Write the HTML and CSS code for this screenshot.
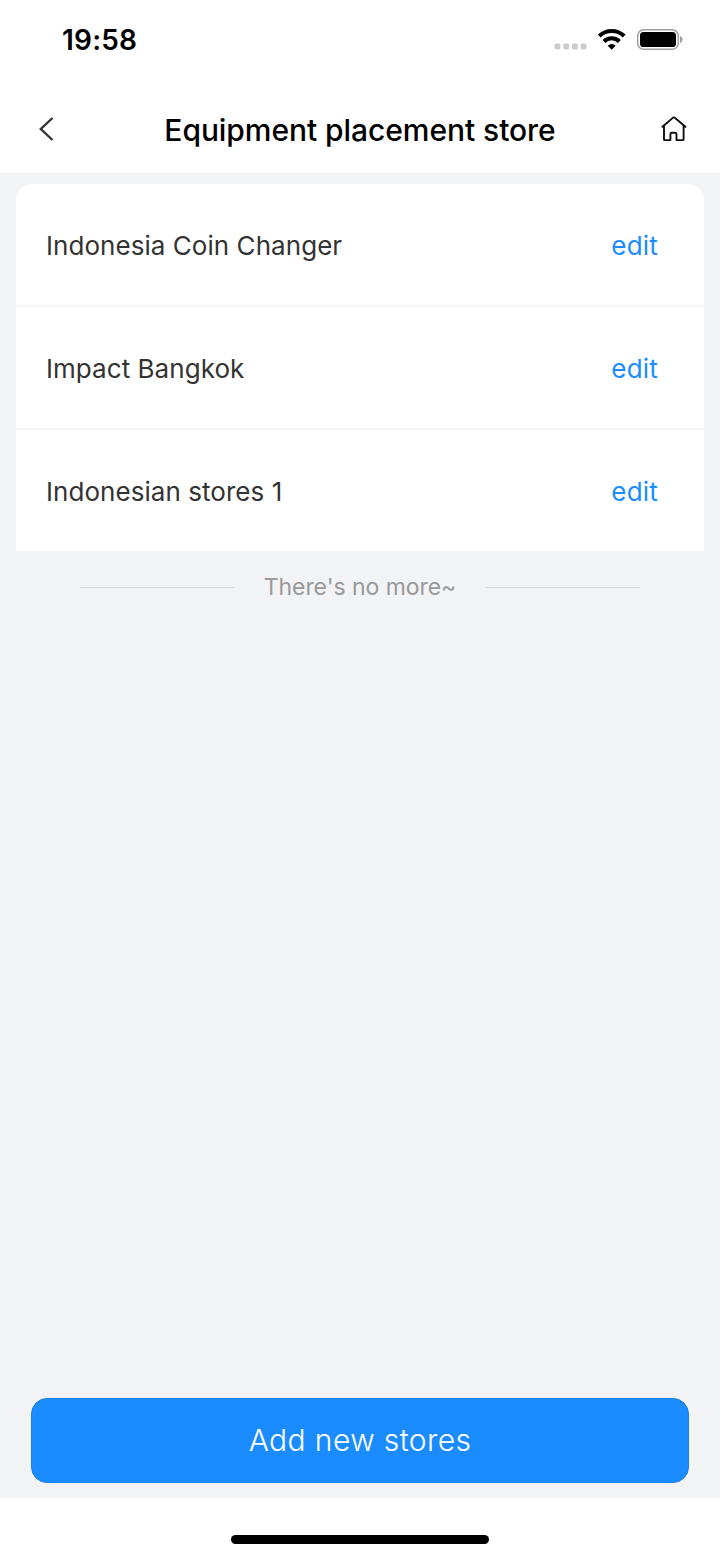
FILE: index.html
```
<!DOCTYPE html>

<html lang="en">
    <head>
        <meta charset="utf-8">
        <title>Equipment placement store</title>
        <link rel="stylesheet" href="styles.css">
    </head>
    <body>

        <div class="status_bar">
            <span class="time">19:58</span>
            <svg class="status_icons" width="130" height="24" viewBox="0 0 130 24">
                <g fill="#cbcbcb">
                    <rect x="1.5" y="15.5" width="6" height="6" rx="2"/>
                    <rect x="10.2" y="15.5" width="6" height="6" rx="2"/>
                    <rect x="18.9" y="15.5" width="6" height="6" rx="2"/>
                    <rect x="27.6" y="15.5" width="6" height="6" rx="2"/>
                </g>
                <g fill="none" stroke="#000" stroke-width="4">
                    <path d="M46.2 8a18 18 0 0 1 25 0"/>
                    <path d="M51 13.5a11 11 0 0 1 15.4 0"/>
                </g>
                <path d="M58.7 21.7l-4-4a5.8 5.8 0 0 1 8 0z"/>
                <rect x="84.7" y="1.7" width="40.6" height="19.6" rx="6" fill="none" stroke="#a0a0a0" stroke-width="1.5"/>
                <rect x="87" y="4" width="36" height="15" rx="3.6"/>
                <path d="M127 8q2.6 1 2.6 3.5t-2.6 3.5z" fill="#a0a0a0"/>
            </svg>
        </div>

        <div class="nav_bar">
            <svg class="back" width="16" height="26" viewBox="0 0 16 26">
                <path d="M14.5 2L2.8 13L14.5 24" fill="none" stroke="#333" stroke-width="2.4"/>
            </svg>
            <span class="nav_title">Equipment placement store</span>
            <svg class="home" width="26" height="26" viewBox="0 0 26 26">
                <path d="M1.4 10.8L12.1 1.6q.7-.5 1.4 0L24.4 10.8M3 9.8V23.4q0 .7.7.7H9.4V18.3q0-1.5 1.5-1.5H14q1.5 0 1.5 1.5V24.1H21.9q.7 0 .7-.7V9.8" fill="none" stroke="#111" stroke-width="1.9" stroke-linecap="round" stroke-linejoin="round"/>
            </svg>
        </div>

        <div class="content">
            <div class="store_list">
                <div class="store">
                    <span class="store_name">Indonesia Coin Changer</span>
                    <a class="edit">edit</a>
                </div>
                <div class="store">
                    <span class="store_name">Impact Bangkok</span>
                    <a class="edit">edit</a>
                </div>
                <div class="store">
                    <span class="store_name">Indonesian stores 1</span>
                    <a class="edit">edit</a>
                </div>
            </div>

            <div class="no_more">
                <div class="line"></div>
                <span class="no_more_text">There's no more~</span>
                <div class="line"></div>
            </div>

            <button class="btn">Add new stores</button>
        </div>

        <div class="bottom_bar">
            <div class="indicator"></div>
        </div>

    </body>
</html>
```
FILE: styles.css
```
*{
    box-sizing: border-box;
}

body{
    display: flex;
    flex-direction: column;
    height: 1558px;
    margin: 0;
    background-color: #fff;
    font-family: Inter, "Liberation Sans", sans-serif;
}

svg{
    display: block;
}

.status_bar{
    display: flex;
    justify-content: space-between;
    align-items: center;
    height: 80px;
    padding: 0 37px 0 62px;
}

.time{
    font-size: 28px;
    font-weight: 600;
    letter-spacing: 0.2px;
}

.nav_bar{
    display: flex;
    justify-content: space-between;
    align-items: center;
    height: 93px;
    padding: 4px 33px 0 38px;
}

.nav_title{
    font-size: 30px;
    font-weight: 500;
    letter-spacing: -0.06px;
    white-space: nowrap;
    margin-left: 5px;
    padding-top: 2px;
}

.content{
    display: flex;
    flex-direction: column;
    height: 1325px;
    padding: 11px 16px 15px;
    background-color: #f2f3f5;
}

.store_list{
    border-radius: 16px 16px 0 0;
    background-color: #fff;
}

.store{
    display: flex;
    justify-content: space-between;
    align-items: center;
    height: 123px;
    padding: 2px 46px 0 30px;
    border-bottom: 2px solid #f5f6f7;
}

.store:last-child{
    height: 121px;
    border-bottom: none;
}

.store_name{
    font-size: 26px;
    letter-spacing: 0.05px;
    color: #333;
}

.edit{
    font-size: 26px;
    letter-spacing: 0.2px;
    color: #1b8cff;
}

.no_more{
    display: flex;
    justify-content: space-between;
    align-items: center;
    height: 72px;
    padding: 0 64px;
}

.no_more_text{
    font-size: 23px;
    letter-spacing: -0.05px;
    color: #999;
}

.line{
    width: 154px;
    height: 1px;
    background-color: #d9dade;
}

.btn{
    height: 85px;
    margin: auto 15px 0;
    padding-bottom: 3px;
    border: 1px solid #1a7fe4;
    border-radius: 16px;
    background-color: #1b8cff;
    color: #fff;
    font-family: inherit;
    font-size: 30px;
    font-weight: 300;
    letter-spacing: 0.4px;
}

.bottom_bar{
    display: flex;
    justify-content: center;
    height: 60px;
    padding-top: 37px;
}

.indicator{
    width: 258px;
    height: 9px;
    border-radius: 5px;
    background-color: #000;
}
```
